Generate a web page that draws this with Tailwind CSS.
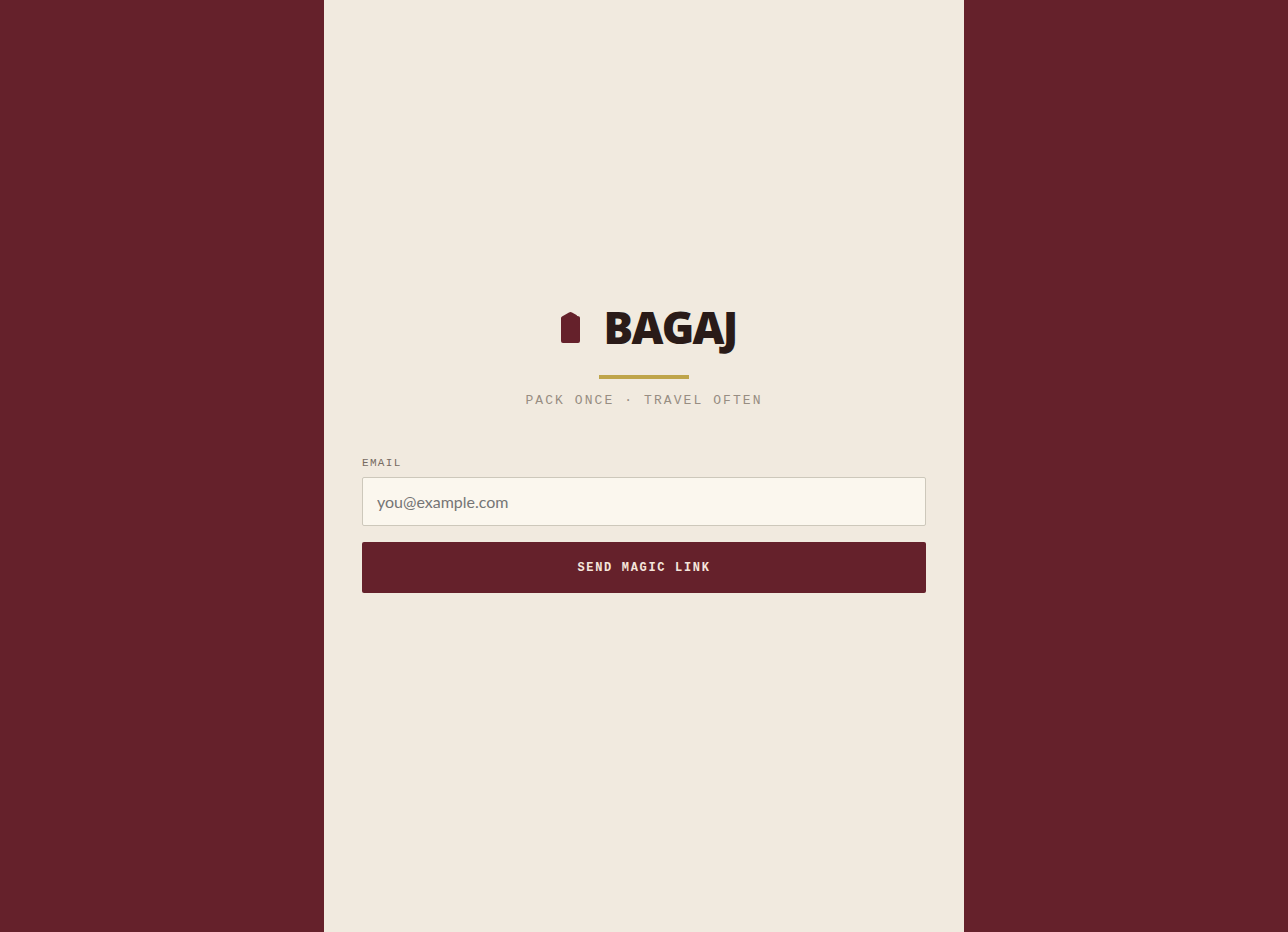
<!DOCTYPE html>
<html lang="en">
<head>
    <meta charset="UTF-8">
    <meta name="viewport" content="width=device-width, initial-scale=1.0">
    <title>Bagaj</title>
    <script src="https://cdn.jsdelivr.net/npm/@tailwindcss/browser@4"></script>
</head>
<body class="bg-[#65212b] font-['Lato',sans-serif] text-[#2a1b18]">

    <main class="mx-auto flex min-h-screen w-full max-w-[640px] flex-col justify-center bg-[#f1eadf] px-[38px] pb-10">

        <!-- Brand -->
        <header class="flex flex-col items-center">
            <div class="flex items-center gap-3.5">
                <svg class="h-[38px] w-[38px]" viewBox="0 0 38 38" fill="#65212b" aria-hidden="true">
                    <path d="M9 10 Q9 9 10 8.400 L17 4.400 Q18.500 3.400 20 4.400 L24.500 7 Q25 8.300 26.500 8.300 Q28 8.300 28 10 V33 Q28 35 26 35 H11 Q9 35 9 33 Z" />
                </svg>
                <h1 class="font-['Open_Sans',sans-serif] text-[44px] leading-[56px] font-extrabold tracking-[-0.04em]">BAGAJ</h1>
            </div>
            <div class="mt-5 h-1 w-[90px] bg-[#bfa54a]"></div>
            <p class="mt-3 font-['Liberation_Mono',monospace] text-[13px] leading-5 tracking-[0.16em] text-[#978d82]">PACK ONCE · TRAVEL OFTEN</p>
        </header>

        <!-- Login form -->
        <form class="mt-11 flex flex-col">
            <label for="email" class="font-['Liberation_Mono',monospace] text-[11px] leading-4 tracking-[0.12em] text-[#766b62]">EMAIL</label>
            <input type="email" id="email" placeholder="you@example.com" required class="mt-1.5 h-[49px] w-full rounded-xs border border-[#cdc8bb] bg-[#fbf7ee] px-3.5 text-base placeholder:text-[#757575]">
            <button type="submit" class="mt-4 h-[51px] w-full rounded-xs bg-[#65212b] font-['Liberation_Mono',monospace] text-xs font-bold tracking-[0.14em] text-[#f5e6dc]">SEND MAGIC LINK</button>
        </form>
    </main>

</body>
</html>
